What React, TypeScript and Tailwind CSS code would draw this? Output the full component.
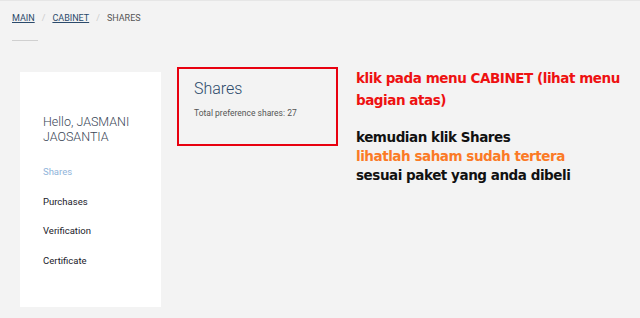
import React from 'react'

const menu = ['Shares', 'Purchases', 'Verification', 'Certificate']

export default function App() {
  return (
    <div className="w-[640px] h-[318px] bg-[#f3f3f3] border-t border-[#e6e6e6] font-['Roboto',sans-serif] overflow-hidden">
      <div className="pl-3 pt-[11px] flex items-center gap-[7px] text-[9px] uppercase leading-[12px]">
        <a className="text-[#2b4a6b] underline">Main</a>
        <span className="text-[#ccc]">/</span>
        <a className="text-[#2b4a6b] underline">Cabinet</a>
        <span className="text-[#ccc]">/</span>
        <span className="text-[#555]">Shares</span>
      </div>
      <div className="ml-3 mt-[16px] w-[26px] h-px bg-[#d0d0d0]" />
      <div className="flex mt-[31px] ml-5">
        <aside className="w-[141px] h-[235px] bg-white pl-[23px] pt-[42px]">
          <h2 className="text-[12.5px] leading-[15px] font-light text-[#3a4656]">
            Hello, JASMANI
            <br />
            JAOSANTIA
          </h2>
          <ul className="mt-[22px] text-[9.5px] leading-[12px]">
            {menu.map((m, i) => (
              <li key={m} className={`${i === 0 ? 'text-[#90b4da]' : 'text-[#1a1a2a]'} mb-[17.5px]`}>
                {m}
              </li>
            ))}
          </ul>
        </aside>
        <section className="ml-4 -mt-[5px] w-[161px] h-[79px] border-2 border-[#e8000f] pl-[15px] pt-[10px]">
          <h1 className="text-[16px] leading-[20px] font-light text-[#2c4a6b]">Shares</h1>
          <p className="mt-[9px] text-[8.5px] leading-[11px] text-[#555]">Total preference shares: 27</p>
        </section>
        <div className="ml-[18px] -mt-[5px] font-['DejaVu_Sans',sans-serif] font-bold text-[13.5px] tracking-[-0.45px]">
          <p className="text-[#ee1111] leading-[22px]">
            klik pada menu CABINET (lihat menu
            <br />
            bagian atas)
          </p>
          <div className="mt-[17px] leading-[19px]">
            <p className="text-[#111]">kemudian klik Shares</p>
            <p className="text-[#fb7a26]">lihatlah saham sudah tertera</p>
            <p className="text-[#111]">sesuai paket yang anda dibeli</p>
          </div>
        </div>
      </div>
    </div>
  )
}
